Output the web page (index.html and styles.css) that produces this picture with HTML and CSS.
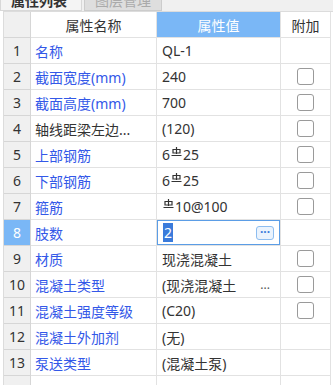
FILE: index.html
```html
<!DOCTYPE html>
<html>
    <head>
        <meta charset="utf-8">
        <link rel="stylesheet" href="styles.css">
    </head>
    <body>
        <div class="tabBar">
            <div class="tab tabActive">属性列表</div>
            <div class="tab">图层管理</div>
        </div>
        <div class="grid">
            <div class="cell numCell"></div>
            <div class="cell headCell">属性名称</div>
            <div class="cell headCell headSel">属性值</div>
            <div class="cell headCell extraCell">附加</div>

            <div class="cell numCell">1</div>
            <div class="cell nameCell">名称</div>
            <div class="cell valCell">QL-1</div>
            <div class="cell extraCell"></div>

            <div class="cell numCell">2</div>
            <div class="cell nameCell">截面宽度(mm)</div>
            <div class="cell valCell">240</div>
            <div class="cell extraCell"><span class="check"></span></div>

            <div class="cell numCell">3</div>
            <div class="cell nameCell">截面高度(mm)</div>
            <div class="cell valCell">700</div>
            <div class="cell extraCell"><span class="check"></span></div>

            <div class="cell numCell">4</div>
            <div class="cell nameCell plain">轴线距梁左边...</div>
            <div class="cell valCell">(120)</div>
            <div class="cell extraCell"><span class="check"></span></div>

            <div class="cell numCell">5</div>
            <div class="cell nameCell">上部钢筋</div>
            <div class="cell valCell">6<svg class="bar" viewBox="0 0 11 10"><path d="M5.5 0V7M2 2.5H9V6H2ZM0.5 8.5H10.5" fill="none" stroke="#333" stroke-width="1.2"/></svg>25</div>
            <div class="cell extraCell"><span class="check"></span></div>

            <div class="cell numCell">6</div>
            <div class="cell nameCell">下部钢筋</div>
            <div class="cell valCell">6<svg class="bar" viewBox="0 0 11 10"><path d="M5.5 0V7M2 2.5H9V6H2ZM0.5 8.5H10.5" fill="none" stroke="#333" stroke-width="1.2"/></svg>25</div>
            <div class="cell extraCell"><span class="check"></span></div>

            <div class="cell numCell">7</div>
            <div class="cell nameCell">箍筋</div>
            <div class="cell valCell"><svg class="bar" viewBox="0 0 11 10"><path d="M5.5 0V7M2 2.5H9V6H2ZM0.5 8.5H10.5" fill="none" stroke="#333" stroke-width="1.2"/></svg>10@100</div>
            <div class="cell extraCell"><span class="check"></span></div>

            <div class="cell numCell numSel">8</div>
            <div class="cell nameCell">肢数</div>
            <div class="cell valCell editCell">
                <div class="editor">
                    <span class="selText">2</span>
                    <span class="moreBtn">···</span>
                </div>
            </div>
            <div class="cell extraCell"></div>

            <div class="cell numCell">9</div>
            <div class="cell nameCell">材质</div>
            <div class="cell valCell">现浇混凝土</div>
            <div class="cell extraCell"><span class="check"></span></div>

            <div class="cell numCell">10</div>
            <div class="cell nameCell">混凝土类型</div>
            <div class="cell valCell"><span class="grow">(现浇混凝土</span><span class="dots">...</span></div>
            <div class="cell extraCell"><span class="check"></span></div>

            <div class="cell numCell">11</div>
            <div class="cell nameCell">混凝土强度等级</div>
            <div class="cell valCell">(C20)</div>
            <div class="cell extraCell"><span class="check"></span></div>

            <div class="cell numCell">12</div>
            <div class="cell nameCell">混凝土外加剂</div>
            <div class="cell valCell">(无)</div>
            <div class="cell extraCell"></div>

            <div class="cell numCell">13</div>
            <div class="cell nameCell">泵送类型</div>
            <div class="cell valCell">(混凝土泵)</div>
            <div class="cell extraCell"></div>

            <div class="cell numCell"></div>
            <div class="cell nameCell"></div>
            <div class="cell valCell"></div>
            <div class="cell extraCell"></div>
        </div>
    </body>
</html>
```

FILE: styles.css
```css
body {
    margin: 0;
    background: #ffffff;
    font-family: "Noto Sans", "Noto Sans CJK SC", sans-serif;
    font-size: 14px;
    color: #333333;
    overflow: hidden;
}
.tabBar {
    display: flex;
    height: 11px;
    background: #f0f0f0;
    overflow: hidden;
}
.tab {
    display: flex;
    align-items: flex-end;
    height: 24px;
    margin-top: -13px;
    padding: 0 10px;
    box-sizing: border-box;
    background: #dedede;
    border: 1px solid #cccccc;
    color: #aaaaaa;
    line-height: 18px;
    margin-left: 2px;
}
.tabActive {
    margin-left: 0;
    width: 82px;
    background: #f4f4f4;
    color: #333333;
    font-weight: bold;
    border-color: #d8d8d8;
}
.grid {
    display: grid;
    grid-template-columns: 27px 126px 124px 50px;
    grid-auto-rows: 26px;
    margin-left: 3px;
    border-left: 1px solid #dcdcdc;
    border-top: 1px solid #dcdcdc;
}
.cell {
    display: flex;
    align-items: center;
    box-sizing: border-box;
    border-right: 1px solid #e2e2e2;
    border-bottom: 1px solid #e2e2e2;
    white-space: nowrap;
    overflow: hidden;
}
.numCell {
    justify-content: center;
    background: #f0f0f0;
    color: #333333;
    border-color: #d6d6d6;
}
.numSel {
    background: #7ab7f6;
    color: #ffffff;
}
.headCell {
    justify-content: center;
    color: #333333;
}
.headSel {
    background: #7ab7f6;
    color: #ffffff;
}
.nameCell {
    padding-left: 4px;
    color: #3358e8;
}
.plain {
    color: #333333;
}
.valCell {
    padding-left: 5px;
    padding-right: 8px;
}
.extraCell {
    justify-content: center;
}
.check {
    width: 17px;
    height: 17px;
    box-sizing: border-box;
    border: 1px solid #9a9a9a;
    border-radius: 3px;
    background: #ffffff;
}
.bar {
    width: 11px;
    height: 10px;
    margin: 0 1px;
    position: relative;
    top: -3px;
}
.grow {
    flex: 1;
}
.dots {
    color: #555555;
    font-size: 12px;
    margin-right: 2px;
}
.editCell {
    padding: 0;
}
.editor {
    display: flex;
    align-items: center;
    width: 100%;
    height: 100%;
    box-sizing: border-box;
    border: 1px solid #5b9de6;
    padding: 0 5px 0 5px;
}
.selText {
    flex: 0 0 auto;
    background: #3a7bdb;
    color: #ffffff;
    padding: 0 1px;
    line-height: 19px;
    margin-right: auto;
}
.moreBtn {
    width: 18px;
    height: 14px;
    box-sizing: border-box;
    border: 1px solid #8dbdf0;
    border-radius: 3px;
    background: #eaf3fd;
    color: #3a7bdb;
    font-size: 12px;
    font-weight: bold;
    line-height: 10px;
    text-align: center;
}
```
